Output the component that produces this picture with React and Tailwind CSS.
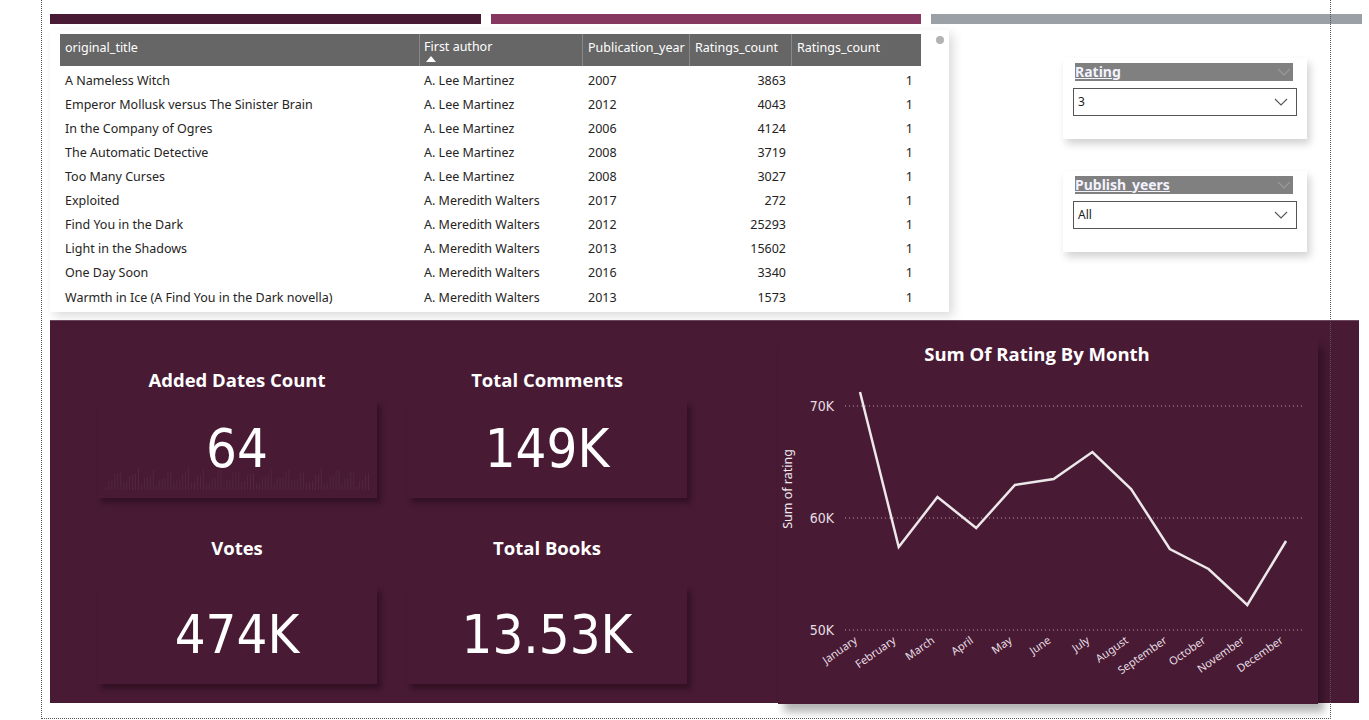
import React from "react";

const rows = [
  ["A Nameless Witch", "A. Lee Martinez", "2007", "3863", "1"],
  ["Emperor Mollusk versus The Sinister Brain", "A. Lee Martinez", "2012", "4043", "1"],
  ["In the Company of Ogres", "A. Lee Martinez", "2006", "4124", "1"],
  ["The Automatic Detective", "A. Lee Martinez", "2008", "3719", "1"],
  ["Too Many Curses", "A. Lee Martinez", "2008", "3027", "1"],
  ["Exploited", "A. Meredith Walters", "2017", "272", "1"],
  ["Find You in the Dark", "A. Meredith Walters", "2012", "25293", "1"],
  ["Light in the Shadows", "A. Meredith Walters", "2013", "15602", "1"],
  ["One Day Soon", "A. Meredith Walters", "2016", "3340", "1"],
  ["Warmth in Ice (A Find You in the Dark novella)", "A. Meredith Walters", "2013", "1573", "1"],
];

const months = [
  ["January", 391],
  ["February", 546],
  ["March", 496],
  ["April", 527],
  ["May", 484],
  ["June", 478],
  ["July", 451],
  ["August", 488],
  ["September", 548],
  ["October", 568],
  ["November", 604],
  ["December", 540],
];

// faint background bars in the first card
const spark = Array.from({ length: 90 }, (_, i) => 3 + ((i * 37) % 17) + ((i * 13) % 5));

const segoe = { fontFamily: "'Noto Sans', 'Open Sans', sans-serif" };
const din = { fontFamily: "'DejaVu Sans Condensed', 'Liberation Sans Narrow', 'DejaVu Sans', sans-serif", fontStretch: "condensed" };

function Chevron({ className }) {
  return (
    <svg width="14" height="8" viewBox="0 0 14 8" className={className}>
      <path d="M1 1 L7 7 L13 1" fill="none" stroke="currentColor" strokeWidth="1.1" />
    </svg>
  );
}

function Slicer({ label, value }) {
  return (
    <div className="w-[244px] h-[81px] bg-white shadow-[3px_5px_8px_rgba(0,0,0,0.18)] pt-[5px]">
      <div className="ml-[12px] w-[218px] h-[18px] bg-[#808080] flex items-center justify-between pr-[2px]">
        <span className="text-[14px] font-bold text-[#f2f2ff] underline leading-none" style={segoe}>
          {label}
        </span>
        <Chevron className="text-[#9a9a9a]" />
      </div>
      <div className="ml-[10px] mt-[7px] w-[224px] h-[28px] border border-[#555] flex items-center justify-between pl-[4px] pr-[8px]">
        <span className="text-[12px] text-[#222]" style={segoe}>
          {value}
        </span>
        <Chevron className="text-[#555]" />
      </div>
    </div>
  );
}

function Kpi({ title, value, gap, withSpark }) {
  return (
    <div className="w-[300px] flex flex-col items-center">
      <div className="h-[24px] flex items-center text-[18.5px] font-bold text-white" style={{ fontFamily: "'Open Sans', sans-serif" }}>
        {title}
      </div>
      <div
        className="relative w-[280px] h-[98px] bg-[#481a34] shadow-[4px_5px_5px_rgba(20,5,12,0.4)] flex items-center justify-center"
        style={{ marginTop: gap }}
      >
        {withSpark && (
          <svg className="absolute left-[8px] bottom-[8px]" width="266" height="30">
            {spark.map((h, i) => (
              <line key={i} x1={i * 2.95 + 1} x2={i * 2.95 + 1} y1={30} y2={30 - h} stroke="#ffffff" strokeOpacity="0.06" strokeWidth="1" />
            ))}
          </svg>
        )}
        <span className="relative text-[54px] text-white leading-none" style={din}>
          {value}
        </span>
      </div>
    </div>
  );
}

function LineChart() {
  const xs = months.map((_, i) => 860 + i * 38.73);
  const pts = months.map(([, y], i) => `${xs[i]},${y}`).join(" ");
  return (
    <svg width="540" height="335" viewBox="778 368 540 335" className="block">
      {[
        ["70K", 405],
        ["60K", 517],
        ["50K", 629],
      ].map(([l, y]) => (
        <g key={l}>
          <line x1="845" x2="1302" y1={y} y2={y} stroke="#b79aa8" strokeWidth="1" strokeDasharray="1 3" />
          <text x="834" y={y + 5} textAnchor="end" fontSize="14" fill="#e6dde2" style={din}>
            {l}
          </text>
        </g>
      ))}
      <text
        x="789"
        y="488"
        transform="rotate(-90 789 488)"
        textAnchor="middle"
        dominantBaseline="middle"
        fontSize="12.5"
        fill="#f0eaee"
        style={segoe}
      >
        Sum of rating
      </text>
      <polyline points={pts} fill="none" stroke="#ece8ea" strokeWidth="2.5" strokeLinejoin="miter" />
      {months.map(([m], i) => (
        <text
          key={m}
          x={xs[i] - 2}
          y={641}
          transform={`rotate(-35 ${xs[i] - 2} 641)`}
          textAnchor="end"
          fontSize="11"
          fill="#e6dde2"
          style={segoe}
        >
          {m}
        </text>
      ))}
    </svg>
  );
}

export default function App() {
  return (
    <div className="relative w-[1369px] h-[720px] bg-white overflow-hidden pt-[14px] pl-[50px]">
      {/* top colour strips */}
      <div className="flex gap-[10px] h-[10px]">
        <div className="w-[431px] bg-[#481a34]" />
        <div className="w-[430px] bg-[#85375f]" />
        <div className="w-[431px] bg-[#9aa0a6]" />
      </div>

      <div className="flex mt-[6px]">
        {/* table */}
        <div className="w-[899px] h-[282px] bg-white shadow-[4px_4px_10px_rgba(0,0,0,0.15)] pl-[10px] pt-[4px] flex gap-[15px]">
          <div className="w-[861px]" style={segoe}>
            <div className="flex h-[32px] bg-[#666666] text-white text-[12.5px]">
              <div className="w-[360px] pl-[5px] pt-[5px] border-r border-[#888]">original_title</div>
              <div className="w-[163px] pl-[4px] pt-[5px] border-r border-[#888] leading-tight">
                First author
                <div className="w-0 h-0 ml-[2px] mt-[1px] border-l-[5px] border-r-[5px] border-b-[6px] border-l-transparent border-r-transparent border-b-white" />
              </div>
              <div className="w-[107px] pl-[5px] pt-[5px] border-r border-[#888]">Publication_year</div>
              <div className="w-[102px] pl-[5px] pt-[5px] border-r border-[#888]">Ratings_count</div>
              <div className="flex-1 pl-[5px] pt-[5px]">Ratings_count</div>
            </div>
            <div className="pt-[3px]">
              {rows.map((r) => (
                <div key={r[0]} className="flex h-[24.1px] items-center text-[12.5px] text-[#252423]">
                  <div className="w-[360px] pl-[5px]">{r[0]}</div>
                  <div className="w-[163px] pl-[4px]">{r[1]}</div>
                  <div className="w-[107px] pl-[5px]">{r[2]}</div>
                  <div className="w-[102px] pr-[6px] text-right">{r[3]}</div>
                  <div className="flex-1 pr-[8px] text-right">{r[4]}</div>
                </div>
              ))}
            </div>
          </div>
          <div className="mt-[2px] w-[8px] h-[8px] rounded-full bg-[#b3b3b3]" />
        </div>

        {/* slicers */}
        <div className="ml-[114px] pt-[28px] flex flex-col gap-[32px]">
          <Slicer label="Rating" value="3" />
          <Slicer label="Publish_yeers" value="All" />
        </div>
      </div>

      {/* bottom panel */}
      <div className="mt-[8px] w-[1309px] h-[383px] bg-[#481a34] border-t border-[#6e4a5c] flex">
        <div className="w-[728px] pl-[37px] pt-[47px] flex flex-col">
          <div className="flex gap-[10px]">
            <Kpi title="Added Dates Count" value="64" gap="8px" withSpark />
            <Kpi title="Total Comments" value="149K" gap="8px" />
          </div>
          <div className="flex gap-[10px] mt-[38px]">
            <Kpi title="Votes" value="474K" gap="26px" />
            <Kpi title="Total Books" value="13.53K" gap="26px" />
          </div>
        </div>
        <div className="mt-[18px] w-[540px] h-[365px] bg-[#481a34] shadow-[6px_8px_8px_rgba(0,0,0,0.3)]">
          <div className="h-[30px] pr-[22px] flex items-center justify-center text-[18.5px] font-bold text-white" style={{ fontFamily: "'Open Sans', sans-serif" }}>
            Sum Of Rating By Month
          </div>
          <LineChart />
        </div>
      </div>

      {/* page guides */}
      <div className="absolute left-[41px] top-0 w-[1290px] h-[719px] border-l border-r border-b border-dotted border-[#555] pointer-events-none" />
    </div>
  );
}
